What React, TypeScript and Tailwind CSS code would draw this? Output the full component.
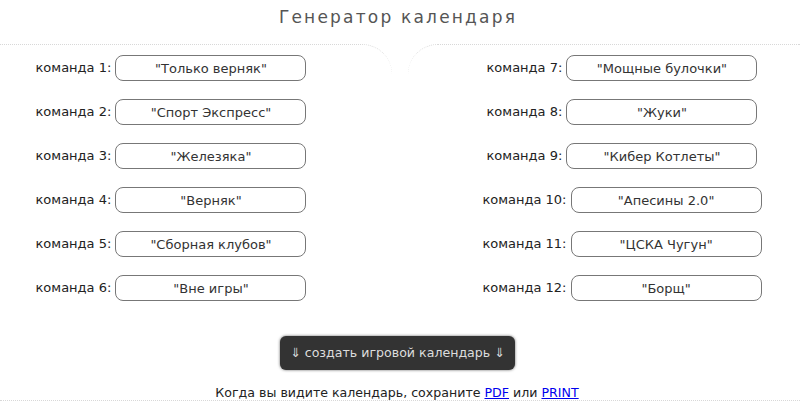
import React from "react";

const left = [
  ["команда 1:", "\"Только верняк\""],
  ["команда 2:", "\"Спорт Экспресс\""],
  ["команда 3:", "\"Железяка\""],
  ["команда 4:", "\"Верняк\""],
  ["команда 5:", "\"Сборная клубов\""],
  ["команда 6:", "\"Вне игры\""],
];
const right = [
  ["команда 7:", "\"Мощные булочки\""],
  ["команда 8:", "\"Жуки\""],
  ["команда 9:", "\"Кибер Котлеты\""],
  ["команда 10:", "\"Апесины 2.0\""],
  ["команда 11:", "\"ЦСКА Чугун\""],
  ["команда 12:", "\"Борщ\""],
];

function Row({ label, value }: { label: string; value: string }) {
  return (
    <div className="flex items-center h-[26px]">
      <span className="text-[13px] text-[#222] whitespace-pre">{label} </span>
      <input
        readOnly
        value={value}
        className="w-[191px] h-[26px] border border-[#777] rounded-[8px] text-center text-[13px] text-[#333] bg-white outline-none"
        style={{ fontFamily: "'DejaVu Sans', sans-serif" }}
      />
    </div>
  );
}

export default function App() {
  return (
    <div className="w-[800px] h-[414px] bg-white overflow-hidden" style={{ fontFamily: "'DejaVu Sans', sans-serif" }}>
      <div className="h-[44px] pt-[7px] pr-[4px] text-center text-[17px] leading-[20px] tracking-[2.2px] text-[#555]">
        Генератор календаря
      </div>
      <div className="flex justify-between">
        <div className="w-[392px] border-t border-dotted border-[#d8d8d8] rounded-tr-[30px] pt-[10px] pr-[50px] flex flex-col items-center gap-[18px]">
          {left.map(([l, v]) => (
            <Row key={l} label={l} value={v} />
          ))}
        </div>
        <div className="w-[392px] border-t border-dotted border-[#d8d8d8] rounded-tl-[30px] pt-[10px] pl-[36px] flex flex-col items-center gap-[18px]">
          {right.map(([l, v]) => (
            <Row key={l} label={l} value={v} />
          ))}
        </div>
      </div>
      <div className="flex justify-center mt-[35px] pr-[5px]">
        <button className="h-[34px] w-[235px] bg-[#333] text-[#ddd] text-[12.6px] rounded-[6px] shadow-[0_0_3px_rgba(0,0,0,0.6)]">
          ⇓ создать игровой календарь ⇓
        </button>
      </div>
      <div className="mt-[15px] h-[16px] leading-[15px] pr-[6px] text-center text-[12.6px] text-[#222] border-b border-dotted border-[#d8d8d8]">
        Когда вы видите календарь, сохраните <a href="#" className="text-[#0000ee] underline">PDF</a> или{" "}
        <a href="#" className="text-[#0000ee] underline">PRINT</a>
      </div>
    </div>
  );
}
